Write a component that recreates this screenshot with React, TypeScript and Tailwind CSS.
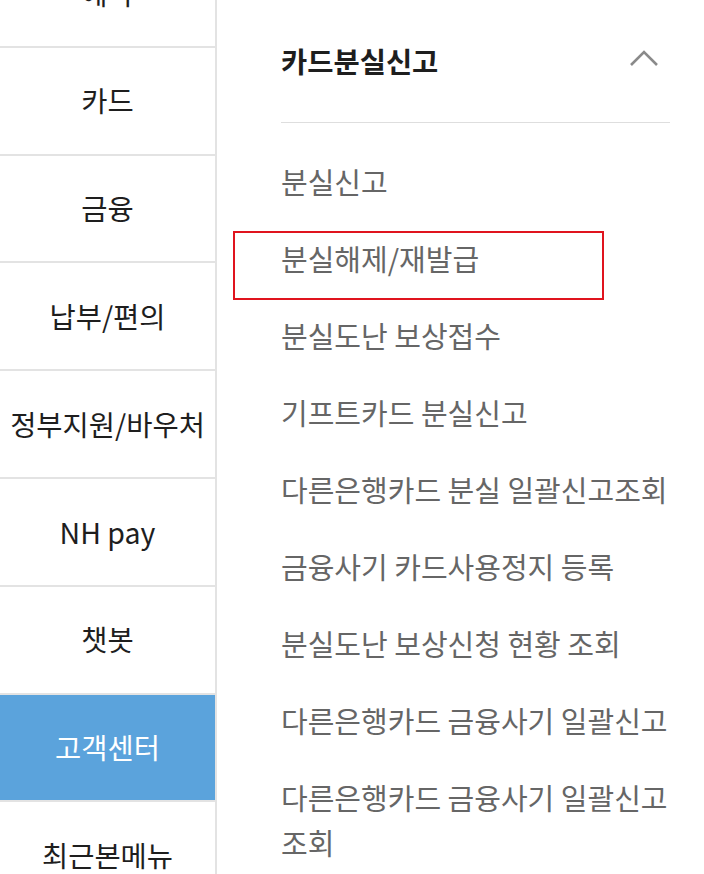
const font = {
  fontFamily: '"Noto Sans CJK KR", "Open Sans", sans-serif',
};

const menus = [
  "예약",
  "카드",
  "금융",
  "납부/편의",
  "정부지원/바우처",
  "NH pay",
  "챗봇",
  "고객센터",
  "최근본메뉴",
];

const subItems = [
  "분실신고",
  "분실해제/재발급",
  "분실도난 보상접수",
  "기프트카드 분실신고",
  "다른은행카드 분실 일괄신고조회",
  "금융사기 카드사용정지 등록",
  "분실도난 보상신청 현황 조회",
  "다른은행카드 금융사기 일괄신고",
  "다른은행카드 금융사기 일괄신고 조회",
];

export default function App() {
  return (
    <div
      className="relative flex h-[874px] w-[704px] overflow-hidden bg-white"
      style={font}
    >
      <div className="w-[217px] shrink-0 border-r-2 border-[#e3e3e3]">
        <div className="-mt-[60px] flex flex-col">
          {menus.map((m) => (
            <div
              key={m}
              className={
                m === "고객센터"
                  ? "flex h-[107.8px] shrink-0 items-center justify-center border-b-2 border-[#e3e3e3] bg-[#5ba3dc] text-[28.5px] text-white"
                  : "flex h-[107.8px] shrink-0 items-center justify-center border-b-2 border-[#e3e3e3] text-[28.5px] text-[#1e1e1e]"
              }
            >
              {m}
            </div>
          ))}
        </div>
      </div>

      <div className="flex-1 pl-[64px] pr-[10px]">
        <div className="mr-[24px] flex h-[123px] items-center justify-between border-b border-[#dedede]">
          <span className="text-[28.5px] font-bold text-[#1e1e1e]">카드분실신고</span>
          <svg
            width="32"
            height="20"
            viewBox="0 0 32 20"
            className="mr-[10px] mb-[6px]"
            fill="none"
            stroke="#8a8a8a"
            strokeWidth="2.6"
          >
            <path d="M3 17 L16 4 L29 17" />
          </svg>
        </div>
        <ul className="pt-[20px]">
          {subItems.map((s) => (
            <li
              key={s}
              className="break-keep py-[16px] text-[29px] leading-[45px] text-[#666666]"
            >
              {s}
            </li>
          ))}
        </ul>
      </div>

      <div className="absolute left-[233px] top-[231px] h-[69px] w-[371px] border-2 border-[#e0141e]" />
    </div>
  );
}
